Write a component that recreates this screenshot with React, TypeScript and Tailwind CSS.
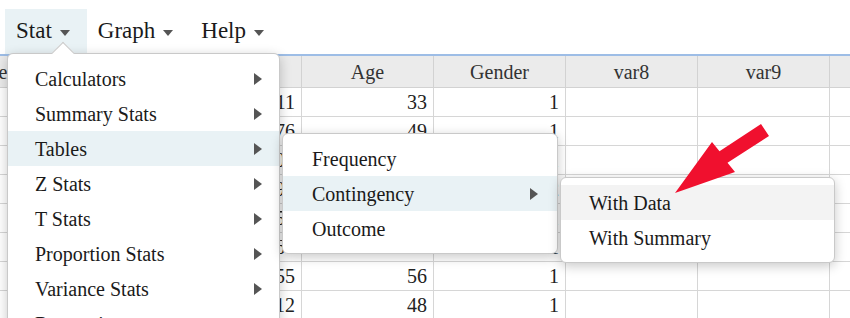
import React from 'react';

const serif = { fontFamily: '"Liberation Serif", "Times New Roman", serif' };

const cols = ['Name', 'Income', 'Score', 'Age', 'Gender', 'var8', 'var9', 'var10'];

const rows = [
  ['', '', '3211', '33', '1', '', '', ''],
  ['', '', '2176', '49', '1', '', '', ''],
  ['', '', '2804', '41', '1', '', '', ''],
  ['', '', '3390', '27', '2', '', '', ''],
  ['', '', '1958', '52', '1', '', '', ''],
  ['', '', '2660', '36', '1', '', '', ''],
  ['', '', '3055', '56', '1', '', '', ''],
  ['', '', '2412', '48', '1', '', '', ''],
];

const Caret = () => (
  <span className="ml-[8px] inline-block w-0 h-0 border-l-[5px] border-r-[5px] border-t-[6px] border-l-transparent border-r-transparent border-t-[#555] translate-y-[1px]" />
);

const RightArrow = () => (
  <span className="inline-block w-0 h-0 border-t-[6px] border-b-[6px] border-l-[8px] border-t-transparent border-b-transparent border-l-[#555]" />
);

type Item = { label: string; sub?: boolean; active?: string };

const MenuItem = ({ item, padL, padR }: { item: Item; padL: string; padR: string }) => (
  <div className={`h-[35px] flex items-center justify-between text-[20px] text-[#1a1a1a] ${padL} ${padR} ${item.active ?? ''}`}>
    <span>{item.label}</span>
    {item.sub && <RightArrow />}
  </div>
);

const statItems: Item[] = [
  { label: 'Calculators', sub: true },
  { label: 'Summary Stats', sub: true },
  { label: 'Tables', sub: true, active: 'bg-[#e9f2f5]' },
  { label: 'Z Stats', sub: true },
  { label: 'T Stats', sub: true },
  { label: 'Proportion Stats', sub: true },
  { label: 'Variance Stats', sub: true },
  { label: 'Regression', sub: true },
];

const tableItems: Item[] = [
  { label: 'Frequency' },
  { label: 'Contingency', sub: true, active: 'bg-[#e9f2f5]' },
  { label: 'Outcome' },
];

const contItems: Item[] = [
  { label: 'With Data', active: 'bg-[#f3f3f3]' },
  { label: 'With Summary' },
];

const App = () => {
  return (
    <div className="relative w-[850px] h-[318px] overflow-hidden bg-white" style={serif}>
      {/* menu bar */}
      <div className="h-[54px] pt-[9px] flex items-stretch pl-[5px] text-[23px] text-[#1a1a1a]">
        <div className="flex items-center pl-[11px] pr-[17px] bg-[#e9f2f5]">
          Stat
          <Caret />
        </div>
        <div className="flex items-center pl-[11px] pr-[17px]">
          Graph
          <Caret />
        </div>
        <div className="flex items-center pl-[11px] pr-[17px]">
          Help
          <Caret />
        </div>
      </div>

      {/* data grid */}
      <div className="border-t-2 border-[#9dbde6] w-[850px] overflow-hidden">
        <div className="ml-[-40px] grid grid-cols-[48px_162px_132px_132px_132px_132px_132px_132px] w-[1002px] text-[20px] text-[#222]">
          {cols.map((c) => (
            <div key={c} className="h-[32px] flex items-center justify-center bg-[#ebebeb] border-r border-b border-[#d2d2d2] text-[#333]">
              {c}
            </div>
          ))}
          {rows.map((r, i) =>
            r.map((v, j) => (
              <div key={`${i}-${j}`} className="h-[29px] flex items-center justify-end pr-[6px] border-r border-b border-[#d6d6d6]">
                {v}
              </div>
            ))
          )}
        </div>
      </div>

      {/* Stat dropdown */}
      <div className="absolute left-[7px] top-[53px] w-[273px] bg-white border border-[#c9c9c9] rounded-[6px] pt-[7px] pb-[7px] shadow-[0_3px_12px_rgba(0,0,0,0.22)]">
        <div className="absolute left-[47px] top-[-9px] w-[16px] h-[16px] rotate-45 bg-white border-l border-t border-[#c9c9c9]" />
        {statItems.map((it) => (
          <MenuItem key={it.label} item={it} padL="pl-[27px]" padR="pr-[17px]" />
        ))}
      </div>

      {/* Tables submenu */}
      <div className="absolute left-[282px] top-[133px] w-[276px] bg-white border border-[#c9c9c9] rounded-[6px] py-[7px] shadow-[0_3px_12px_rgba(0,0,0,0.22)]">
        {tableItems.map((it) => (
          <MenuItem key={it.label} item={it} padL="pl-[29px]" padR="pr-[19px]" />
        ))}
      </div>

      {/* Contingency submenu */}
      <div className="absolute left-[560px] top-[177px] w-[275px] bg-white border border-[#c9c9c9] rounded-[6px] py-[7px] shadow-[0_3px_12px_rgba(0,0,0,0.22)]">
        {contItems.map((it) => (
          <MenuItem key={it.label} item={it} padL="pl-[28px]" padR="pr-[19px]" />
        ))}
      </div>

      {/* red arrow annotation */}
      <svg className="absolute left-0 top-0 pointer-events-none" width="850" height="318">
        <polygon
          points="761,124 719.5,151.3 712,142 675,193 735,172 727.5,162.7 769,136"
          fill="#f0102e"
        />
      </svg>
    </div>
  );
};

export default App;
